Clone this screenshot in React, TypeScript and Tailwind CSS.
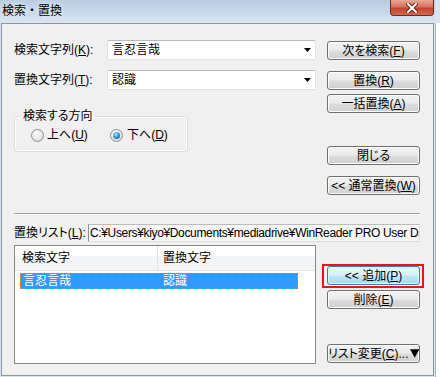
import type { ReactNode } from "react";

const U = ({ children }: { children: ReactNode }) => (
  <span className="underline underline-offset-[1px]">{children}</span>
);

type BotonProps = {
  children: ReactNode;
  foco?: boolean;
  className?: string;
};

function Boton({ children, foco, className = "" }: BotonProps) {
  return (
    <button
      type="button"
      className={`flex h-[19px] w-[93px] items-center justify-center whitespace-nowrap rounded-[3px] border text-[12px] leading-none text-black ${
        foco
          ? "border-[#3c7fb1] bg-[linear-gradient(to_bottom,#eaf6fd_0%,#d9f0fc_48%,#bee6fd_52%,#a7d9f5_100%)] shadow-[inset_0_0_0_1px_#e5f4fc]"
          : "border-[#707070] bg-[linear-gradient(to_bottom,#f2f2f2_0%,#ebebeb_48%,#dddddd_52%,#cfcfcf_100%)] shadow-[inset_0_0_0_1px_#fcfcfc]"
      } ${className}`}
    >
      {children}
    </button>
  );
}

function Combo({ valor }: { valor: string }) {
  return (
    <div className="flex h-[20px] w-[209px] items-center rounded-[2px] border border-[#dde2e8] border-t-[#b5b8bf] bg-white pl-[4px] pr-[4px]">
      <span className="flex-1 leading-none">{valor}</span>
      <svg width="7" height="4" viewBox="0 0 7 4">
        <polygon points="0,0 7,0 3.5,4" fill="#000" />
      </svg>
    </div>
  );
}

function Radio({ marcado }: { marcado?: boolean }) {
  return (
    <span className="flex h-[13px] w-[13px] shrink-0 items-center justify-center rounded-full border border-[#8e8f8f] bg-[radial-gradient(circle_at_40%_35%,#ffffff,#e8e8e8_55%,#cdcdcd)]">
      {marcado && (
        <span className="h-[7px] w-[7px] rounded-full bg-[radial-gradient(circle_at_40%_35%,#a8e6ff,#2a8ad4_55%,#0b4e8c)]" />
      )}
    </span>
  );
}

export default function App() {
  return (
    <div className="flex h-[377px] w-[440px] overflow-hidden bg-[#d8e4f1] font-['Liberation_Sans','Noto_Sans_CJK_JP',sans-serif] text-[12px] text-black [font-feature-settings:'palt']">
      <div className="flex w-[435px] flex-col">
        {/* barra de título */}
        <div className="flex h-[23px] items-start bg-[linear-gradient(to_bottom,#b9cce1_0%,#c8d8ea_50%,#d9e5f2_100%)]">
          <span className="pl-[2px] pt-[3px] leading-[16px] [font-feature-settings:normal] [text-shadow:0_0_6px_#ffffff]">
            検索・置換
          </span>
          <div className="ml-auto mr-[1px] flex h-[16px] w-[44px] items-center justify-center rounded-b-[4px] border border-t-0 border-[#6e2a1e] bg-[linear-gradient(to_bottom,#e8a896_0%,#d8735d_45%,#c4442c_55%,#d06a4c_100%)]">
            <svg width="12" height="10" viewBox="0 0 12 10">
              <path d="M2 1 L10 9 M10 1 L2 9" stroke="#5a2318" strokeWidth="4" strokeLinecap="square" />
              <path d="M2 1 L10 9 M10 1 L2 9" stroke="#ffffff" strokeWidth="2" strokeLinecap="square" />
            </svg>
          </div>
        </div>

        {/* cuerpo */}
        <div className="ml-[1px] h-[353px] w-[433px] border border-[#8d949c] bg-[#f0f0f0] pl-[12px]">
          <div className="flex">
            <div className="w-[302px]">
              <div className="mt-[16px] flex h-[20px] items-center">
                <span className="w-[93px] whitespace-nowrap leading-none">
                  検索文字列(<U>K</U>):
                </span>
                <Combo valor="言忍言哉" />
              </div>
              <div className="mt-[10px] flex h-[20px] items-center">
                <span className="w-[93px] whitespace-nowrap leading-none">
                  置換文字列(<U>T</U>):
                </span>
                <Combo valor="認識" />
              </div>
              <fieldset className="mt-[19px] w-[174px] rounded-[3px] border border-[#d5dfe5] pb-[8px] shadow-[inset_0_0_0_1px_#ffffff]">
                <legend className="ml-[6px] px-[2px] leading-[14px]">検索する方向</legend>
                <div className="mt-[4px] flex h-[16px] items-center pl-[16px]">
                  <span className="flex w-[79px] items-center gap-[3px]">
                    <Radio />
                    <span className="whitespace-nowrap leading-none">
                      上へ(<U>U</U>)
                    </span>
                  </span>
                  <span className="flex items-center gap-[4px]">
                    <Radio marcado />
                    <span className="whitespace-nowrap leading-none">
                      下へ(<U>D</U>)
                    </span>
                  </span>
                </div>
              </fieldset>
            </div>
            <div className="ml-[11px] flex flex-col">
              <Boton className="mt-[17px]">
                次を検索(<U>F</U>)
              </Boton>
              <Boton className="mt-[11px]">
                置換(<U>R</U>)
              </Boton>
              <Boton className="mt-[4px]">
                一括置換(<U>A</U>)
              </Boton>
              <Boton className="mt-[33px]">閉じる</Boton>
              <Boton className="mt-[11px]">
                &lt;&lt; 通常置換(<U>W</U>)
              </Boton>
            </div>
          </div>

          <div className="mt-[18px] h-[2px] w-[406px] border-t border-b border-t-[#a0a0a0] border-b-white" />

          <div className="mt-[9px] flex h-[18px] w-[406px] items-center">
            <span className="w-[74px] shrink-0 whitespace-nowrap leading-none">
              置換リスト(<U>L</U>):
            </span>
            <div className="flex h-[18px] min-w-0 flex-1 items-center overflow-hidden whitespace-nowrap border border-[#dcdcdc] border-l-[#8f8f8f] border-t-[#bcbcbc] bg-[#f7f7f7] pl-[1px] leading-none tracking-[-0.35px]">
              C:¥Users¥kiyo¥Documents¥mediadrive¥WinReader PRO User Data
            </div>
          </div>

          <div className="mt-[3px] flex">
            <div className="h-[119px] w-[302px] border border-[#828790] bg-white">
              <div className="flex h-[25px] border-b border-[#e5e5e5] bg-[linear-gradient(to_bottom,#ffffff_0%,#ffffff_40%,#f3f4f6_42%,#f3f4f6_100%)]">
                <div className="flex w-[143px] items-center border-r border-[#dfe0e2] pl-[7px] leading-none">
                  検索文字
                </div>
                <div className="flex flex-1 items-center pl-[5px] leading-none">置換文字</div>
              </div>
              <div className="ml-[5px] mt-[2px] flex h-[16px] w-[278px] items-center border border-dotted border-[#d88a3c] bg-[#3399ff] leading-none text-white">
                <span className="w-[137px] pl-[2px]">言忍言哉</span>
                <span className="pl-[5px]">認識</span>
              </div>
            </div>
            <div className="ml-[11px] flex flex-col">
              <Boton foco className="mt-[21px]">
                &lt;&lt; 追加(<U>P</U>)
              </Boton>
              <Boton className="mt-[5px]">
                削除(<U>E</U>)
              </Boton>
              <Boton className="mt-[35px]">
                リスト変更(<U>C</U>)...
                <svg width="10" height="9" viewBox="0 0 10 9" className="ml-[1px]">
                  <polygon points="0,0 10,0 5,9" fill="#000" />
                </svg>
              </Boton>
            </div>
          </div>
        </div>
      </div>

      {/* borde de la ventana de atrás */}
      <div className="mt-[23px] h-[354px] flex-1 border-l border-[#b5b5b5] bg-white" />

      {/* marca roja */}
      <div className="pointer-events-none absolute left-[322px] top-[264px] h-[24px] w-[102px] border-2 border-[#e8141c]" />
    </div>
  );
}
